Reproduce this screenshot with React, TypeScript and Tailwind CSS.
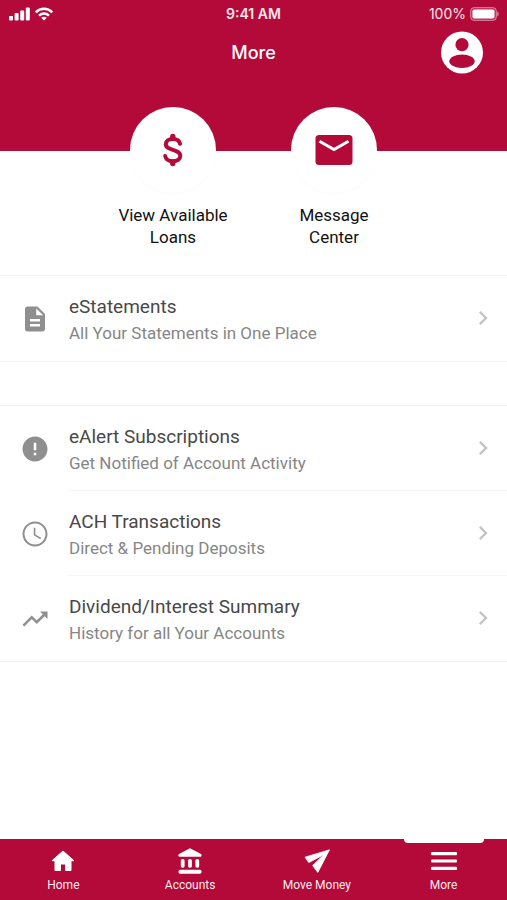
import type { ReactNode } from "react";

const roboto = "font-['Roboto','Liberation_Sans',sans-serif]";
const inter = "font-['Inter','Liberation_Sans',sans-serif]";

function Glyph({ d, className }: { d: string; className: string }) {
  return (
    <svg viewBox="0 0 24 24" fill="currentColor" aria-hidden="true" className={className}>
      <path d={d} fillRule="evenodd" />
    </svg>
  );
}

const icons = {
  document:
    "M14 2H6c-1.1 0-2 .9-2 2v16c0 1.1.9 2 2 2h12c1.1 0 2-.9 2-2V8l-6-6zm2 16H8v-2h8v2zm0-4H8v-2h8v2zm-3-5V3.500L18.500 9H13z",
  alert:
    "M12 2C6.480 2 2 6.480 2 12s4.480 10 10 10 10-4.480 10-10S17.520 2 12 2zm1 15h-2v-2h2v2zm0-4h-2V7h2v6z",
  clock:
    "M12 2C6.500 2 2 6.500 2 12s4.500 10 10 10 10-4.500 10-10S17.500 2 12 2zm0 18.400c-4.640 0-8.400-3.760-8.400-8.400S7.360 3.600 12 3.600s8.400 3.760 8.400 8.400-3.760 8.400-8.400 8.400zM12.300 7h-1.300v6l5.250 3.150.65-1.100-4.600-2.730z",
  trend: "M16 6l2.290 2.290-4.880 4.880-4-4L2 16.590 3.410 18l6-6 4 4 6.300-6.290L22 12V6z",
  chevron: "M8.600 16.600 13.200 12 8.600 7.400 10 6l6 6-6 6z",
};

function StatusBar() {
  return (
    <div className={`${inter} grid h-7 grid-cols-3 items-center px-2 text-[14px] leading-4 text-white/90`}>
      <div className="flex items-center gap-1">
        <svg viewBox="0 0 22 14" className="h-[14px] w-[22px]" fill="#fff" aria-label="Signal">
          <rect x="1" y="9" width="4" height="4.500" rx="1" />
          <rect x="6.600" y="6" width="4" height="7.500" rx="1" />
          <rect x="12.200" y="3.500" width="4" height="10" rx="1" />
          <rect x="17.800" y=".5" width="4" height="13" rx="1" />
        </svg>
        <svg viewBox="0 0 20 14" className="h-[14px] w-5" fill="none" stroke="#fff" strokeWidth="2.500" aria-label="Wi-Fi">
          <path d="M1.700 5.300C6.500.7 13.500.7 18.300 5.300M5 8.700c3-2.800 7-2.800 10 0" />
          <path d="M7.200 10.800c1.600-1.400 4-1.400 5.600 0L10 13.600z" fill="#fff" stroke="none" />
        </svg>
      </div>
      <div className="text-center font-semibold">9:41 AM</div>
      <div className="flex items-center justify-end gap-1">
        <span>100%</span>
        <svg viewBox="0 0 29 14" className="h-[14px] w-[29px]" aria-label="Battery full">
          <rect x=".6" y=".6" width="25.800" height="12.800" rx="3.500" fill="#fff" fillOpacity=".15" stroke="#fff" strokeOpacity=".45" />
          <rect x="2.500" y="2.500" width="22" height="9" rx="1.800" fill="#fff" />
          <path d="M27.200 4.600c2 .7 2 4.100 0 4.800z" fill="#fff" fillOpacity=".5" />
        </svg>
      </div>
    </div>
  );
}

function Shortcut({ icon, lines }: { icon: ReactNode; lines: [string, string] }) {
  return (
    <a href="#" className="flex w-[161px] flex-col items-center gap-[11px]">
      <span className="flex size-[86px] items-center justify-center rounded-full bg-white text-[#b40a3a] shadow-[0_1px_3px_rgba(0,0,0,0.02)]">
        {icon}
      </span>
      <span className="text-center text-[17px] leading-[22px] text-[#111111]">
        {lines[0]}
        <br />
        {lines[1]}
      </span>
    </a>
  );
}

function Row({ icon, title, detail, divider }: { icon: string; title: string; detail: string; divider?: boolean }) {
  return (
    <li>
      <a href="#" className="flex items-center pl-5">
        <Glyph d={icon} className="size-[30px] text-[#8f8f8f]" />
        <span
          className={`ml-[19px] flex h-[85px] flex-1 items-center justify-between border-b pr-[10px] ${
            divider ? "border-[#f6f6f6]" : "border-transparent"
          }`}
        >
          <span className="flex flex-col pt-[3px] leading-[26px]">
            <span className="text-[19px] text-[#484848]">{title}</span>
            <span className="text-[17px] text-[#868686]">{detail}</span>
          </span>
          <Glyph d={icons.chevron} className="size-7 text-[#c4c4c4]" />
        </span>
      </a>
    </li>
  );
}

function Tab({ icon, label, active }: { icon: ReactNode; label: string; active?: boolean }) {
  return (
    <a href="#" aria-current={active ? "page" : undefined} className="flex flex-1 flex-col items-center">
      <span className={`h-1 w-20 rounded-b ${active ? "bg-white" : ""}`} />
      <span className="mt-1 flex h-7 items-center">{icon}</span>
      <span className="mt-0.5 text-[12px] leading-4 text-white/95">{label}</span>
    </a>
  );
}

export default function App() {
  return (
    <div className={`${roboto} flex min-h-screen flex-col bg-white`}>
      <header className="h-[151px] bg-[#b40a3a] text-white">
        <StatusBar />
        <div className="grid grid-cols-3 items-center px-5">
          <span />
          <h1 className={`${inter} text-center text-[18px] leading-6 font-medium`}>More</h1>
          <button type="button" aria-label="Profile" className="justify-self-end">
            <svg viewBox="0 0 50 50" className="size-[50px]" aria-hidden="true">
              <circle cx="25" cy="24.500" r="21" fill="#fff" />
              <circle cx="25" cy="16.700" r="6.600" fill="#b40a3a" />
              <ellipse cx="25" cy="33.300" rx="12.700" ry="6.800" fill="#b40a3a" />
            </svg>
          </button>
        </div>
      </header>

      <main className="flex-1">
        <nav aria-label="Shortcuts" className="-mt-11 flex justify-center pb-[27px]">
          <Shortcut
            lines={["View Available", "Loans"]}
            icon={
              <svg viewBox="0 0 20 34" className="h-[34px] w-5" fill="none" stroke="currentColor" strokeLinecap="round" aria-hidden="true">
                <path
                  strokeWidth="4"
                  d="M17 10.800C16.200 7.400 13.400 6 9.800 6c-4.200 0-7 2-7 5.200 0 6.800 14.500 4.500 14.500 11.600 0 3.400-3 5.400-7.500 5.400-4.200 0-7-1.900-7.600-5.200"
                />
                <path strokeWidth="5.400" d="M9.800 3.500v1.500M9.800 29v1.500" />
              </svg>
            }
          />
          <Shortcut
            lines={["Message", "Center"]}
            icon={
              <svg viewBox="0 0 38 30" className="h-[30px] w-[38px]" aria-hidden="true">
                <rect x=".5" width="37" height="30" rx="3.500" fill="currentColor" />
                <path d="M4.500 6.300 19 14.500l14.500-8.200" fill="none" stroke="#fff" strokeWidth="3" />
              </svg>
            }
          />
        </nav>

        <ul className="border-y border-[#f4f4f4]">
          <Row icon={icons.document} title="eStatements" detail="All Your Statements in One Place" />
        </ul>
        <ul className="mt-[43px] border-y border-[#f4f4f4]">
          <Row icon={icons.alert} title="eAlert Subscriptions" detail="Get Notified of Account Activity" divider />
          <Row icon={icons.clock} title="ACH Transactions" detail="Direct & Pending Deposits" divider />
          <Row icon={icons.trend} title="Dividend/Interest Summary" detail="History for all Your Accounts" />
        </ul>
      </main>

      <nav aria-label="Main" className="flex h-[61px] bg-[#b40a3a] text-white">
        <Tab
          label="Home"
          icon={
            <svg viewBox="0 0 24 22" className="h-[22px] w-6" fill="#fff" stroke="#fff" strokeLinejoin="round" aria-hidden="true">
              <path d="M12 1 1 10.700h3V20.500h5.500V14h5v6.500H20v-9.800h3z" />
            </svg>
          }
        />
        <Tab
          label="Accounts"
          icon={
            <svg viewBox="0 0 24 26" className="h-[26px] w-6" fill="#fff" aria-hidden="true">
              <path d="M12 .3 23 6c1 1 .7 2.800-.5 2.800h-21C.3 8.800 0 7 1 6z" />
              <rect x="2.800" y="11" width="3.800" height="8.800" rx="1.700" />
              <rect x="10.100" y="11" width="3.800" height="8.800" rx="1.700" />
              <rect x="17.400" y="11" width="3.800" height="8.800" rx="1.700" />
              <rect x=".5" y="21.700" width="23" height="4" rx="1.600" />
            </svg>
          }
        />
        <Tab
          label="Move Money"
          icon={
            <svg viewBox="0 0 26 24" className="h-6 w-[26px]" fill="#fff" stroke="#fff" strokeWidth=".8" strokeLinejoin="round" aria-hidden="true">
              <path d="M25.500.8 1 8.200l3.800 5.400L20 5.600 8.600 16.500l5.200 6.900z" />
            </svg>
          }
        />
        <Tab
          label="More"
          active
          icon={
            <svg viewBox="0 0 26 20" className="h-5 w-[26px]" fill="#fff" aria-hidden="true">
              <rect y="1" width="26" height="3.200" rx="1" />
              <rect y="8.400" width="26" height="3.200" rx="1" />
              <rect y="15.800" width="26" height="3.200" rx="1" />
            </svg>
          }
        />
      </nav>
    </div>
  );
}
